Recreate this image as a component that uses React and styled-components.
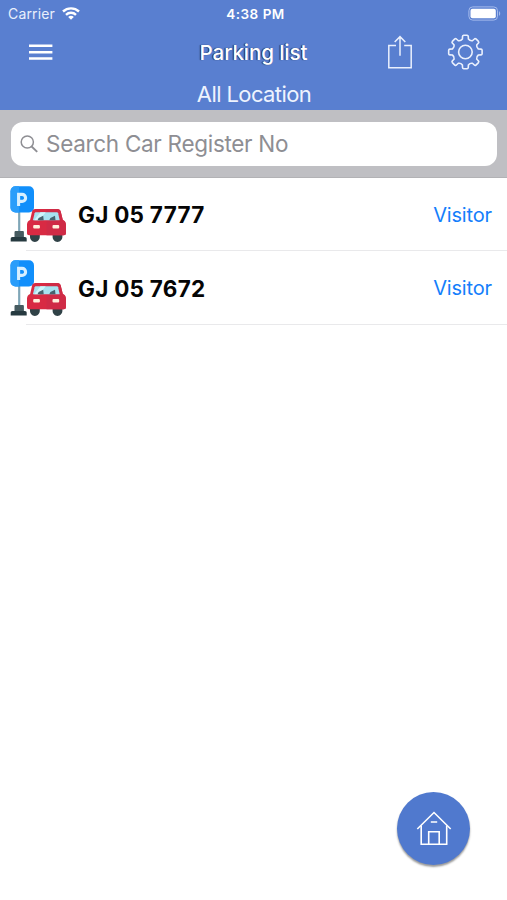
import React from 'react';
import styled, { createGlobalStyle } from 'styled-components';

const GlobalStyle = createGlobalStyle`
  * {
    box-sizing: border-box;
  }
  body {
    margin: 0;
    background: #fff;
    font-family: Inter, 'Liberation Sans', sans-serif;
  }
  svg {
    display: block;
    flex-shrink: 0;
  }
`;

const Screen = styled.div`
  position: relative;
  display: flex;
  flex-direction: column;
  height: 900px;
  overflow: hidden;
  background: #fff;
`;

const Header = styled.header`
  height: 110px;
  background: #597fd0;
  color: #fff;
`;

const StatusBar = styled.div`
  display: grid;
  grid-template-columns: 1fr auto 1fr;
  align-items: center;
  height: 27px;
  padding: 0 6px 0 8px;
`;

const Carrier = styled.div`
  display: flex;
  align-items: center;
  gap: 7px;
  color: #e9effc;
  font-size: 14px;
  letter-spacing: 0.15px;
`;

const Time = styled.time`
  padding-left: 2px;
  font-size: 13.5px;
  font-weight: 600;
  letter-spacing: 0.5px;
`;

const BatterySlot = styled.div`
  display: flex;
  justify-content: flex-end;
`;

const NavBar = styled.div`
  display: grid;
  grid-template-columns: 1fr auto 1fr;
  align-items: center;
  height: 50px;
  padding: 0 24px;
`;

const IconButton = styled.button`
  display: flex;
  padding: 0;
  border: 0;
  background: none;
  color: inherit;
`;

const MenuButton = styled(IconButton)`
  padding-left: 4px;
`;

const Title = styled.h1`
  margin: 0;
  padding-top: 1px;
  font-size: 20.5px;
  font-weight: 500;
  letter-spacing: -0.05px;
  line-height: 26px;
  text-shadow: -1px 0 1px #1c2438;
`;

const Actions = styled.div`
  display: flex;
  align-items: center;
  justify-content: flex-end;
  gap: 35px;
  color: #eaf0fd;
`;

const Location = styled.div`
  padding-left: 1px;
  color: #eef3fe;
  font-size: 22px;
  letter-spacing: -0.6px;
  line-height: 34px;
  text-align: center;
`;

const SearchBar = styled.div`
  height: 68px;
  padding: 12px 10px 12px 11px;
  border-bottom: 1px solid #b2b2b5;
  background: #bfbfc3;
`;

const SearchField = styled.label`
  display: flex;
  align-items: center;
  gap: 7px;
  height: 44px;
  padding: 0 9px;
  border-radius: 12px;
  background: #fff;
  color: #8e8e93;
`;

const SearchInput = styled.input`
  flex: 1;
  min-width: 0;
  padding: 0 0 2px;
  border: 0;
  outline: 0;
  background: none;
  font-family: inherit;
  font-size: 22.5px;
  letter-spacing: -0.3px;

  &::placeholder {
    color: #8e8e93;
    opacity: 1;
  }
`;

const List = styled.ul`
  margin: 0;
  padding: 0;
  list-style: none;
`;

const Row = styled.li`
  display: flex;
  align-items: center;
  height: 73.4px;
  padding: 0 15px 0 10px;
  background: linear-gradient(#e9e9eb, #e9e9eb) 26px 100% / 100% 1px no-repeat;
`;

const Plate = styled.strong`
  margin-left: 11px;
  color: #050505;
  font-size: 22.5px;
  font-weight: 700;
  letter-spacing: 0.27px;
`;

const Kind = styled.span`
  margin-left: auto;
  color: #147efb;
  font-size: 20px;
  letter-spacing: -0.15px;
`;

const HomeButton = styled.button`
  position: absolute;
  right: 37px;
  bottom: 35px;
  display: flex;
  align-items: center;
  justify-content: center;
  width: 73px;
  height: 73px;
  padding: 0;
  border: 0;
  border-radius: 50%;
  background: #5079ce;
  box-shadow: 0 2px 2px rgba(0, 0, 0, 0.4);
  color: #fff;
`;

const WifiIcon = () => (
  <svg width="18" height="14" viewBox="0 0 18 14" fill="none" stroke="#fff" strokeWidth="2.4">
    <path d="M1 4.5C5.5.3 12.5.3 17 4.5" />
    <path d="M4 7.8C6.8 5.1 11.2 5.1 14 7.8" />
    <path d="M9 12.7 6.2 9.9C7.8 8.4 10.2 8.4 11.8 9.9Z" fill="#fff" stroke="none" />
  </svg>
);

const BatteryIcon = () => (
  <svg width="33" height="15" viewBox="0 0 33 15">
    <rect x=".9" y=".9" width="28.6" height="13.2" rx="3.8" fill="none" stroke="#a5bbec" />
    <rect x="2.5" y="2.7" width="25.3" height="9.6" rx="2" fill="#fff" />
    <path d="M31 5.2c1.6.6 1.6 4 0 4.6z" fill="#a5bbec" />
  </svg>
);

const MenuIcon = () => (
  <svg width="25" height="18" viewBox="0 0 25 18" stroke="#fff" strokeWidth="2.6">
    <path d="M1 2.8h23.4M1 9.2h23.4M1 15.5h23.4" />
  </svg>
);

const ShareIcon = () => (
  <svg width="25" height="34" viewBox="0 0 25 34" fill="none" stroke="currentColor" strokeWidth="1.5">
    <path d="M9 10.4H1.8v22.3h22.4V10.4h-7" />
    <path d="M13 20.7V1.9M7.7 7 13 1.6 18.3 7" />
  </svg>
);

const TEETH = [0, 45, 90, 135, 180, 225, 270, 315];

// one tooth plus the valley next to it, repeated around the hub
const gearPoint = (radius, degrees) => {
  const a = ((degrees - 90) * Math.PI) / 180;
  return `${(18.4 + radius * Math.cos(a)).toFixed(2)} ${(18 + radius * Math.sin(a)).toFixed(2)}`;
};

const gearPath = `${TEETH.map(
  (t, i) =>
    `${i ? 'L' : 'M'}${gearPoint(13.3, t - 13)} L${gearPoint(15.8, t - 10.5)} Q${gearPoint(16.8, t - 10)} ${gearPoint(
      16.8,
      t - 6
    )} L${gearPoint(16.8, t + 6)} Q${gearPoint(16.8, t + 10)} ${gearPoint(15.8, t + 10.5)} L${gearPoint(
      13.3,
      t + 13
    )} Q${gearPoint(11.8, t + 22.5)} ${gearPoint(13.3, t + 32)}`
).join(' ')} Z`;

const GearIcon = () => (
  <svg width="36" height="36" viewBox="0 0 36 36" fill="none" stroke="currentColor" strokeWidth="1.6" strokeLinejoin="round">
    <path d={gearPath} />
    <circle cx="18.4" cy="18" r="6.8" />
  </svg>
);

const SearchIcon = () => (
  <svg width="19" height="19" viewBox="0 0 19 19" fill="none" stroke="currentColor" strokeWidth="1.5">
    <circle cx="7.3" cy="7" r="6.1" />
    <path d="m11.6 11.5 5.6 5.4" strokeWidth="1.9" />
  </svg>
);

const HouseIcon = () => (
  <svg width="36" height="36" viewBox="0 0 36 36" fill="none" stroke="currentColor" strokeWidth="1.6">
    <path d="M1.3 18 18 1.5 34.7 18" />
    <path d="M5.2 14.6v18.7h25.5V14.6" />
    <path d="M12.7 33.1V20.7h10.5v12.4M14.8 11h6.4" />
  </svg>
);

const ParkingIcon = () => (
  <svg width="57" height="57" viewBox="0 0 57 57">
    <path d="M8.1 26h2.2v22H8.1z" fill="#7fa6b7" />
    <rect x=".5" y=".2" width="23.5" height="26.3" rx="5" fill="#118ffb" />
    <path d="M5.5.2H9v26.3H5.5a5 5 0 0 1-5-5V5.2a5 5 0 0 1 5-5z" fill="#2a9dfa" />
    <path d="M8.6 20V8.4h3.5a3.5 3.5 0 0 1 0 7H8.6" fill="none" stroke="#d8efff" strokeWidth="3.1" />
    <path d="M4.5 46.5c0-1 .5-1.4 1.4-1.4h6.6c.9 0 1.4.5 1.4 1.4v5.2H4.5z" fill="#465b60" />
    <path d="M.7 55.6V53c0-1.2.6-1.9 1.8-1.9h12.4c1.2 0 1.8.7 1.8 1.9v2.6z" fill="#263a40" />
    <path d="M20 47h9.8v3.6c0 3.2-2 5.3-4.9 5.3S20 53.8 20 50.600zM42.600 47h9.800v3.600c0 3.200-2 5.300-4.900 5.300s-4.900-2.100-4.900-5.300z" fill="#304247" />
    <path d="M25.2 23h22.2c1.8 0 2.9 1 3.300 2.600l2.100 8.400c2.100.9 3.100 2.400 3.100 4.800V47c0 1.500-.7 2.200-2.200 2.200H19.200c-1.500 0-2.200-.7-2.200-2.200v-8.200c0-2.400 1-3.900 3.100-4.800l2-8.400c.4-1.600 1.400-2.600 3.100-2.600z" fill="#d82a43" />
    <path d="M36.500 23h10.900c1.800 0 2.900 1 3.300 2.600l2.100 8.400c2.100.9 3.100 2.400 3.100 4.800V47c0 1.500-.7 2.200-2.200 2.200H36.500z" fill="#cf2b46" />
    <path d="M26 26.200h20.700c.8 0 1.200.4 1.400 1.100l1.600 6.900H22.900l1.700-6.900c.2-.7.6-1.100 1.400-1.100z" fill="#a7e2f0" />
    <path d="m30.500 26.200-6.300 8h5.200l6.300-8z" fill="#cff5fb" />
    <path d="m28.600 32 4.600-2.200.5 4.400h-6.200zM40.400 32l4.600-2.200.5 4.400h-6.200z" fill="#45636e" />
    <rect x="23.200" y="38.900" width="6.700" height="3.700" rx="1" fill="#fff0dc" />
    <rect x="42.500" y="38.900" width="6.700" height="3.700" rx="1" fill="#fff0dc" />
  </svg>
);

const cars = [
  { plate: 'GJ 05 7777', kind: 'Visitor' },
  { plate: 'GJ 05 7672', kind: 'Visitor' },
];

export default function App() {
  return (
    <Screen>
      <GlobalStyle />
      <Header>
        <StatusBar>
          <Carrier>
            Carrier
            <WifiIcon />
          </Carrier>
          <Time>4:38 PM</Time>
          <BatterySlot>
            <BatteryIcon />
          </BatterySlot>
        </StatusBar>
        <NavBar>
          <MenuButton aria-label="Menu">
            <MenuIcon />
          </MenuButton>
          <Title>Parking list</Title>
          <Actions>
            <IconButton aria-label="Share">
              <ShareIcon />
            </IconButton>
            <IconButton aria-label="Settings">
              <GearIcon />
            </IconButton>
          </Actions>
        </NavBar>
        <Location>All Location</Location>
      </Header>
      <SearchBar>
        <SearchField>
          <SearchIcon />
          <SearchInput placeholder="Search Car Register No" />
        </SearchField>
      </SearchBar>
      <List>
        {cars.map(({ plate, kind }) => (
          <Row key={plate}>
            <ParkingIcon />
            <Plate>{plate}</Plate>
            <Kind>{kind}</Kind>
          </Row>
        ))}
      </List>
      <HomeButton aria-label="Home">
        <HouseIcon />
      </HomeButton>
    </Screen>
  );
}
